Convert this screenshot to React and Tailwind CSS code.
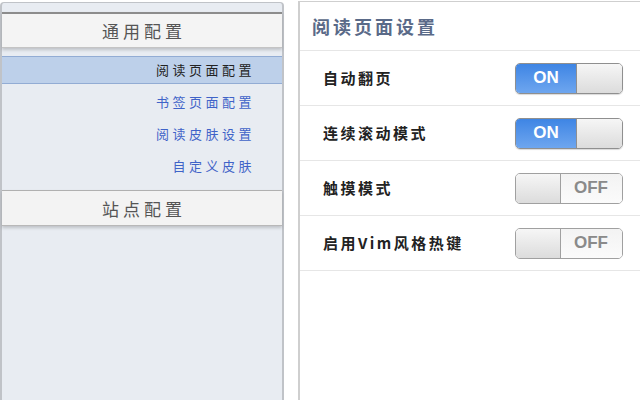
import React from "react";

const menu = [
  { label: "阅读页面配置", active: true },
  { label: "书签页面配置" },
  { label: "阅读皮肤设置" },
  { label: "自定义皮肤" },
];

const settings = [
  { label: "自动翻页", on: true },
  { label: "连续滚动模式", on: true },
  { label: "触摸模式", on: false },
  { label: "启用Vim风格热键", on: false },
];

const Toggle = ({ on }) => {
  if (on) {
    return (
      <div className="flex w-[108px] h-[31px] rounded-[5px] border border-[#8f8f8f] overflow-hidden shadow-[0_1px_1px_rgba(0,0,0,0.15)]">
        <div className="w-[61px] bg-gradient-to-b from-[#3e85e4] to-[#6ea6ef] flex items-center justify-center text-white text-[17px] font-bold font-['Liberation_Sans',sans-serif] border-r border-[#8f8f8f]">
          ON
        </div>
        <div className="flex-1 bg-gradient-to-b from-[#f6f6f6] to-[#dcdcdc]"></div>
      </div>
    );
  }
  return (
    <div className="flex w-[108px] h-[31px] rounded-[5px] border border-[#a0a0a0] overflow-hidden">
      <div className="w-[45px] bg-gradient-to-b from-[#f6f6f6] to-[#dcdcdc] border-r border-[#a0a0a0]"></div>
      <div className="flex-1 bg-gradient-to-b from-[#f3f3f3] to-[#fbfbfb] flex items-center justify-end pr-[14px] text-[#8a8a8a] text-[17px] font-bold font-['Liberation_Sans',sans-serif]">
        OFF
      </div>
    </div>
  );
};

export default function App() {
  return (
    <div className="w-[640px] h-[400px] bg-white flex overflow-hidden font-['Noto_Sans_CJK_SC',sans-serif]">
      <div className="w-[284px] mt-[2px] bg-[#e8ecf2] border-l-2 border-r-2 border-t border-[#c0c3c8] rounded-t-[4px] pt-[9px] flex flex-col">
        <div className="h-[36px] border-t-2 border-[#8c8c8c] border-b border-b-[#c4c4c4] bg-[#f4f4f4] shadow-[0_2px_3px_rgba(0,0,0,0.18)] flex items-center justify-center pl-[4px] text-[17px] text-[#555] tracking-[4px]">
          通用配置
        </div>
        <div className="h-[8px]"></div>
        {menu.map((m) => (
          <div
            key={m.label}
            className={
              m.active
                ? "h-[28px] bg-[#bdd0ea] border-t border-b border-[#92acd4] flex items-center justify-end pr-[27px] text-[13px] text-[#222] tracking-[3.5px] mb-[2px]"
                : "h-[32px] flex items-center justify-end pr-[27px] text-[13px] text-[#3f63c8] tracking-[3.5px]"
            }
          >
            {m.label}
          </div>
        ))}
        <div className="h-[8px]"></div>
        <div className="h-[36px] border-t border-[#b0b0b0] border-b border-b-[#b8b8b8] bg-[#f3f3f3] shadow-[0_2px_3px_rgba(0,0,0,0.18)] flex items-center justify-center pl-[4px] pt-[2px] text-[17px] text-[#555] tracking-[4px]">
          站点配置
        </div>
      </div>
      <div className="w-[14px]"></div>
      <div className="flex-1 mt-[1px] border-l-2 border-t border-[#cfcfcf] flex flex-col">
        <div className="h-[49px] border-b border-[#e6e6e6] flex items-center pl-[12px] text-[18px] font-bold text-[#5a6a88] tracking-[3px]">
          阅读页面设置
        </div>
        {settings.map((s) => (
          <div
            key={s.label}
            className="h-[55px] border-b border-[#e6e6e6] flex items-center justify-between pl-[23px] pr-[17px]"
          >
            <span className="text-[15px] font-bold text-[#222] tracking-[2.5px]">
              {s.label}
            </span>
            <Toggle on={s.on} />
          </div>
        ))}
      </div>
    </div>
  );
}
